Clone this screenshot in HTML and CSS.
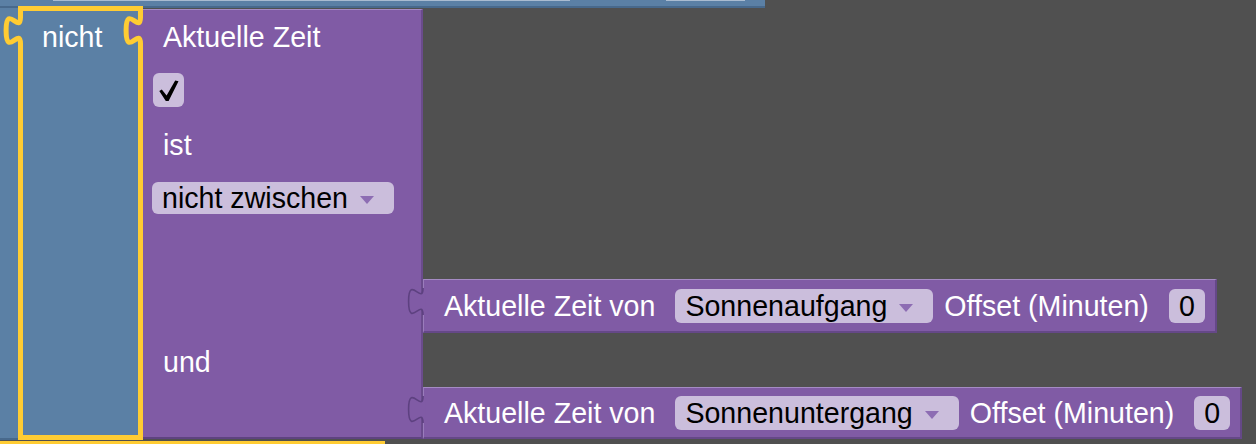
FILE: index.html
```html
<!DOCTYPE html>
<html lang="de">
<head>
<meta charset="utf-8">
<title>Blockly</title>
<link rel="stylesheet" href="styles.css">
</head>
<body>
<div class="topbar">
  <div class="tf tf1"></div>
  <div class="tf tf2"></div>
</div>
<div class="main">
  <div class="outer-left"></div>
  <div class="nicht">
    <span class="label">nicht</span>
    <svg class="ntabs" width="150" height="60" viewBox="0 0 150 60">
      <g transform="translate(20.5 17) scale(1.8)">
        <path d="M0,0 c0,10 -8,-8 -8,7.5 s8,-2.5 8,7.5 L2,15 L2,0 Z" fill="#5b80a5"/>
        <path d="M0,-3 V0 c0,10 -8,-8 -8,7.5 s8,-2.5 8,7.5 V18" fill="none" stroke="#ffcc33" stroke-width="2.8"/>
      </g>
      <g transform="translate(140.5 17) scale(1.8)">
        <path d="M0,0 c0,10 -8,-8 -8,7.5 s8,-2.5 8,7.5 L2,15 L2,0 Z" fill="#805ba5"/>
        <path d="M0,-3 V0 c0,10 -8,-8 -8,7.5 s8,-2.5 8,7.5 V18" fill="none" stroke="#ffcc33" stroke-width="2.8"/>
      </g>
    </svg>
  </div>
  <div class="pcol">
    <div class="prow r1"><div class="cell"><span class="label">Aktuelle Zeit</span></div></div>
    <div class="prow r2"><div class="cell"><div class="check"><svg class="tick" width="20" height="22" viewBox="0 0 20 22"><path d="M0.3,11 L2.8,9.4 L7.6,15.6 L16.2,0.5 L19.5,1.3 L9.6,21 L6.8,21 Z" fill="#000"/></svg></div></div></div>
    <div class="prow r3"><div class="cell"><span class="label">ist</span></div></div>
    <div class="prow r4"><div class="cell"><div class="field dd"><span>nicht zwischen</span><i class="arrow"></i></div></div></div>
    <div class="prow r5"><div class="cell"></div></div>
    <div class="prow r6">
      <div class="cell"></div>
      <div class="sub">
        <svg class="stab" width="22" height="40" viewBox="0 0 22 40">
          <g transform="translate(19 9) scale(1.8)">
            <path d="M0,0 c0,10 -8,-8 -8,7.5 s8,-2.5 8,7.5 L1.5,15 L1.5,0 Z" fill="#805ba5"/>
            <path d="M0,0 c0,10 -8,-8 -8,7.5 s8,-2.5 8,7.5" fill="none" stroke="#5d4180" stroke-width="0.9"/>
          </g>
        </svg>
        <span class="label">Aktuelle Zeit von</span>
        <div class="field dd"><span>Sonnenaufgang</span><i class="arrow"></i></div>
        <span class="label offset">Offset (Minuten)</span>
        <div class="field num">0</div>
      </div>
    </div>
    <div class="prow r7"><div class="cell"><span class="label">und</span></div></div>
    <div class="prow r8">
      <div class="cell"></div>
      <div class="sub">
        <svg class="stab" width="22" height="40" viewBox="0 0 22 40">
          <g transform="translate(19 9) scale(1.8)">
            <path d="M0,0 c0,10 -8,-8 -8,7.5 s8,-2.5 8,7.5 L1.5,15 L1.5,0 Z" fill="#805ba5"/>
            <path d="M0,0 c0,10 -8,-8 -8,7.5 s8,-2.5 8,7.5" fill="none" stroke="#5d4180" stroke-width="0.9"/>
          </g>
        </svg>
        <span class="label">Aktuelle Zeit von</span>
        <div class="field dd"><span>Sonnenuntergang</span><i class="arrow"></i></div>
        <span class="label offset">Offset (Minuten)</span>
        <div class="field num">0</div>
      </div>
    </div>
  </div>
</div>
<div class="bottom-strip"></div>
</body>
</html>
```

FILE: styles.css
```css
* { box-sizing: border-box; }
html, body { margin: 0; padding: 0; }
body {
  width: 1256px;
  height: 444px;
  overflow: hidden;
  background: #505050;
  font-family: "Liberation Sans", Arial, Helvetica, sans-serif;
}

.topbar {
  width: 765px;
  height: 8px;
  background: #5b80a5;
  border-bottom: 2px solid #48698c;
  display: flex;
  align-items: flex-start;
}
.tf { height: 1px; background: #a9bbd0; }
.tf1 { margin-left: 53px; width: 517px; }
.tf2 { margin-left: 96px; width: 79px; }

.main {
  display: flex;
  align-items: flex-start;
  height: 433px;
}

.outer-left {
  width: 18px;
  height: 432px;
  background: #5b80a5;
  border-bottom: 2px solid #48698c;
}

.nicht {
  position: relative;
  width: 125px;
  height: 434px;
  margin-top: -2px;
  background: #5b80a5;
  border: 5px solid #ffcc33;
  padding: 10px 0 0 19px;
}
.ntabs {
  position: absolute;
  left: -23px;
  top: -11px;
  overflow: visible;
}

.label {
  display: block;
  color: #fff;
  font-size: 28.6px;
  line-height: 32px;
  white-space: nowrap;
}

.pcol {
  display: flex;
  flex-direction: column;
  margin-top: 1px;
}
.prow {
  display: flex;
  align-items: flex-start;
}
.cell {
  width: 280px;
  background: #805ba5;
  border-right: 2px solid #6a4b8c;
  padding-left: 20px;
  display: flex;
  flex-direction: column;
  align-items: flex-start;
}
.r1 .cell { height: 55px; border-top: 1px solid #a58bc4; padding-top: 11px; }
.r2 .cell { height: 54px; padding: 9px 0 0 10px; }
.r3 .cell { height: 54px; padding-top: 11px; }
.r4 .cell { height: 54px; padding: 10px 0 0 9px; }
.r5 .cell { height: 53px; }
.r6 .cell { height: 54px; }
.r7 .cell { height: 54px; padding-top: 13px; }
.r8 .cell { height: 52px; border-bottom: 2px solid #5e4380; }

.check {
  width: 31px;
  height: 34px;
  background: #cbbedc;
  border-radius: 6px;
  display: flex;
  align-items: center;
  justify-content: center;
}
.tick { display: block; margin-top: 1px; margin-left: 1px; }

.field {
  background: #cbbedc;
  border-radius: 6px;
  color: #000;
  font-size: 28.6px;
  height: 34px;
  line-height: 34px;
  display: flex;
  align-items: center;
  white-space: nowrap;
}
.dd { padding: 0 20px 0 10px; margin-left: 20px; }
.r4 .dd { margin-left: 0; height: 32px; line-height: 32px; padding-right: 20px; }
.arrow {
  width: 0;
  height: 0;
  border-left: 7.5px solid transparent;
  border-right: 7.5px solid transparent;
  border-top: 8px solid #8d6db3;
  margin-left: 12px;
  margin-top: 4px;
}
.num { width: 36px; justify-content: center; margin-left: 20px; }

.sub {
  position: relative;
  display: flex;
  align-items: center;
  background: #805ba5;
  border-top: 1px solid #a58bc4;
  border-left: 1px solid #9a7dbb;
  border-right: 2px solid #654888;
  border-bottom: 2px solid #654888;
  padding: 0 10px 0 20px;
}
.r6 .sub { height: 54px; }
.r8 .sub { height: 52px; }
.sub .offset { margin-left: 11px; }
.stab {
  position: absolute;
  left: -20px;
  top: -1px;
  overflow: visible;
}

.bottom-strip {
  width: 385px;
  height: 3px;
  background: #ffcc33;
}
```
